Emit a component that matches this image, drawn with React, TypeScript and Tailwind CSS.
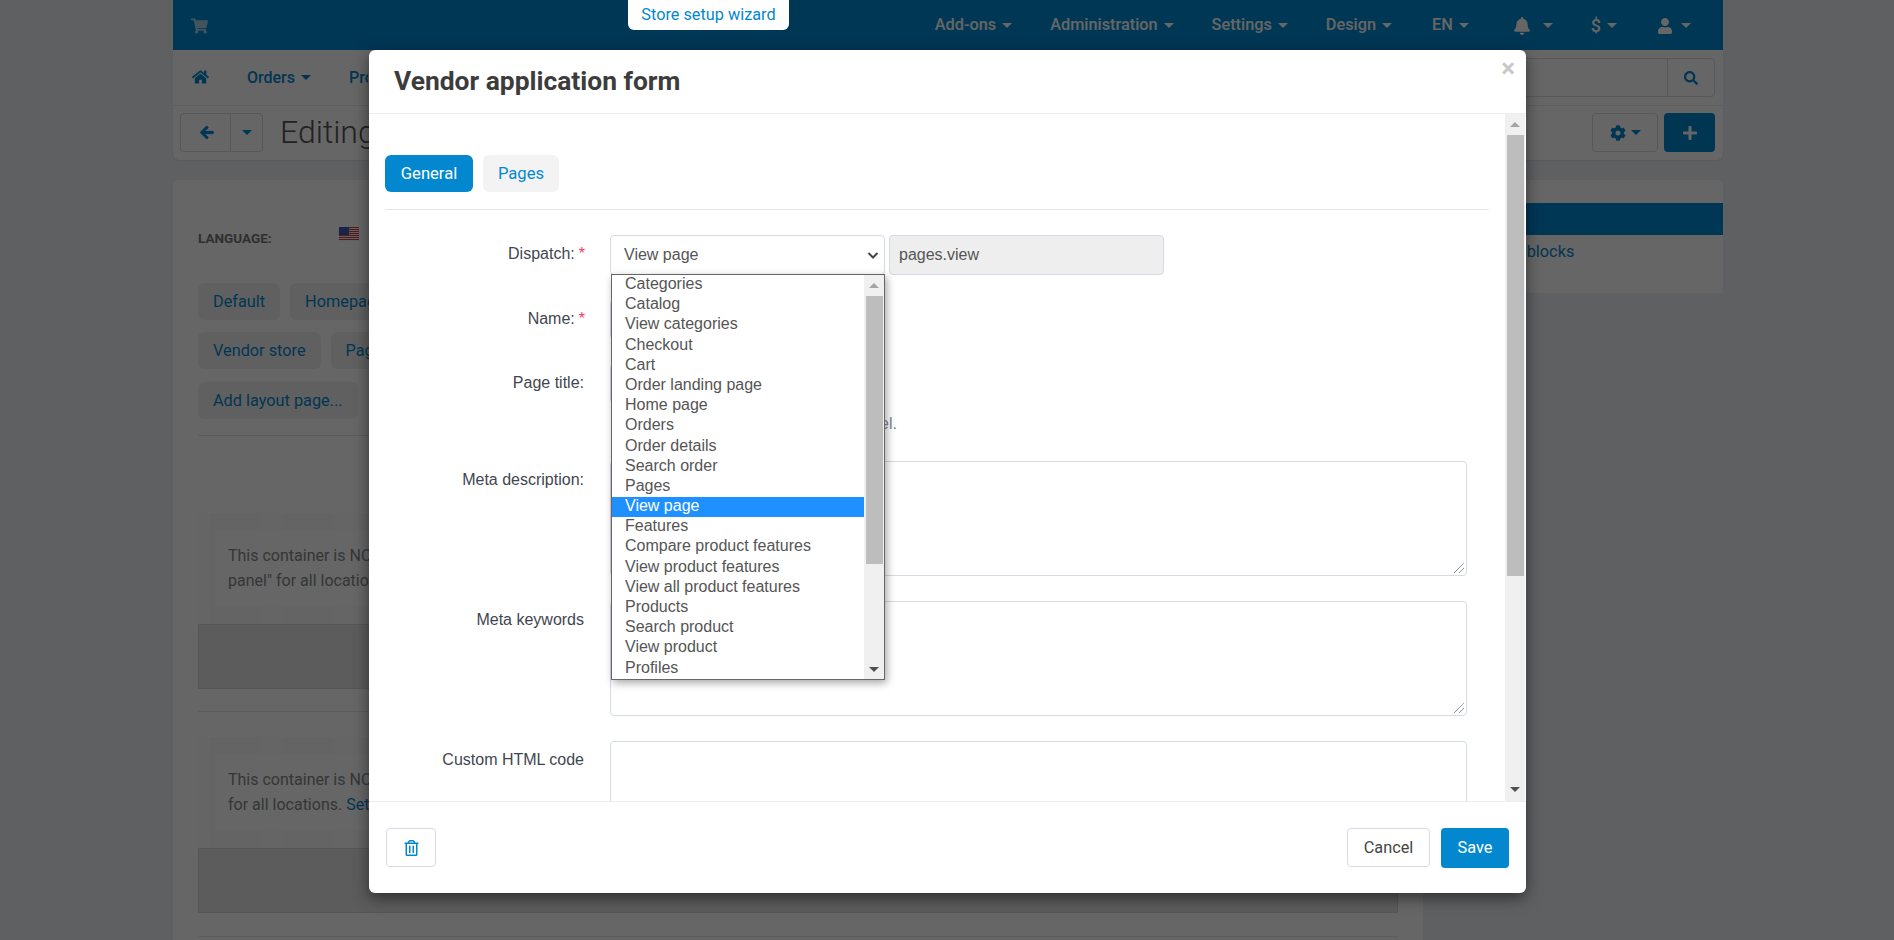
import React from "react";
import { FaShoppingCart, FaHome, FaArrowLeft, FaSearch, FaCog, FaPlus, FaBell, FaUser, FaRegTrashAlt } from "react-icons/fa";

const Caret = ({ c = "border-t-[#0388cf]" }: { c?: string }) => (
  <span className={`inline-block w-0 h-0 border-x-[5px] border-x-transparent border-t-[5px] ${c}`} />
);

const TopItem = ({ label, className }: { label: React.ReactNode; className: string }) => (
  <div className={`flex items-center gap-[6px] text-white font-medium text-[16.3px] ${className}`}>
    {label}
    <Caret c="border-t-white" />
  </div>
);

const PageButton = ({ children, className = "" }: { children: React.ReactNode; className?: string }) => (
  <div className={`h-[37px] px-[15px] pt-[1px] flex items-center rounded-[6px] bg-[#f0f1f3] text-[#0388cf] text-[16.3px] shrink-0 ${className}`}>{children}</div>
);

const UsFlag = () => (
  <svg width="20" height="14" viewBox="0 0 20 14" className="block">
    <rect width="20" height="14" fill="#f5f5f5" />
    {[0, 2, 4, 6, 8, 10, 12].map((y) => (
      <rect key={y} y={y} width="20" height="1" fill="#d8413f" />
    ))}
    <rect width="10" height="8" fill="#3c5bb5" />
  </svg>
);

const Notice = ({ children, top }: { children: React.ReactNode; top: string }) => (
  <div className={top}>
    <div className="h-[111px] bg-[#fcfcfd] pl-[12px]">
      <div className="h-[111px] py-[18px] pl-[5px] bg-[repeating-linear-gradient(90deg,#f9f9fa_0px,#f9f9fa_49px,#fcfcfd_49px,#fcfcfd_74px)]">
        <div className="h-[75px] bg-[#ffffff] pl-[13px] pt-[12px] text-[16px] leading-[25px] text-[#888] whitespace-nowrap">{children}</div>
      </div>
    </div>
    <div className="h-[65px] bg-[#e6e7e9] border border-[#d6d7d9]" />
  </div>
);

const Label = ({ text, req }: { text: string; req?: boolean }) => (
  <label className={`w-[200px] shrink-0 pt-[10px] text-right leading-[18px] text-[16px] text-[#3f4650] whitespace-nowrap ${req ? "" : "pr-[1px]"}`}>
    {text}
    {req ? <span className="text-[#f23b5c] ml-[4px]">*</span> : null}
  </label>
);

const ITEMS = [
  "Categories", "Catalog", "View categories", "Checkout", "Cart", "Order landing page", "Home page", "Orders",
  "Order details", "Search order", "Pages", "View page", "Features", "Compare product features",
  "View product features", "View all product features", "Products", "Search product", "View product", "Profiles",
];

const BORDER = "border border-[#d5dbe4]";

const TextArea = ({ h }: { h: string }) => (
  <div className={`relative w-[857px] ${h} ${BORDER} rounded-[4px] bg-white shrink-0`}>
    <svg width="12" height="12" viewBox="0 0 12 12" className="absolute right-[1px] bottom-[1px]">
      <path d="M1 11 L11 1 M6 11 L11 6" stroke="#666" strokeWidth="1" strokeDasharray="1 0.5" />
    </svg>
  </div>
);

export default function App() {
  return (
    <div className="relative h-[940px] overflow-hidden bg-[#eef0f5] font-['Roboto',sans-serif]">
      {/* underlying page */}
      <div className="w-[1550px] ml-[173px]">
        <header className="h-[50px] pt-[1px] bg-[#008ad4] flex items-center relative">
          <FaShoppingCart className="ml-[18px] text-[#a8d2ea] w-[17px] h-[16px]" />
          <div className="ml-auto flex items-center pr-[32px]">
            <TopItem label="Add-ons" className="mr-[38px]" />
            <TopItem label="Administration" className="mr-[38px]" />
            <TopItem label="Settings" className="mr-[38px]" />
            <TopItem label="Design" className="mr-[40px]" />
            <TopItem label="EN" className="mr-[44px]" />
            <TopItem label={<FaBell className="w-[18px] h-[18px] mr-[6px]" />} className="mr-[38px]" />
            <TopItem label={<span className="text-[18px]">$</span>} className="mr-[40px]" />
            <TopItem label={<FaUser className="w-[16px] h-[16px] mr-[2px]" />} className="" />
          </div>
        </header>
        <div className="h-[56px] bg-white border-b border-[#e9ebee] flex items-center pl-[19px] pr-[8px]">
          <FaHome className="text-[#0388cf] w-[17px] h-[16px] -mt-[2px]" />
          <div className="ml-[38px] flex items-center gap-[6px] text-[#0388cf] text-[16px] font-medium">Orders <Caret /></div>
          <div className="ml-[38px] text-[#0388cf] text-[16px] font-medium w-[19px] overflow-hidden">Products</div>
          <div className="ml-auto w-[300px] h-[39px] border border-[#d5dbe4] rounded-[4px] flex justify-end">
            <div className="w-[47px] border-l border-[#d5dbe4] flex items-center justify-center">
              <FaSearch className="text-[#0388cf] w-[14px] h-[14px]" />
            </div>
          </div>
        </div>
        <div className="h-[54px] bg-white rounded-b-[6px] flex items-start pt-[7px] pl-[7px] pr-[8px] shadow-[0_1px_2px_rgba(0,0,0,0.08)]">
          <div className="flex h-[39px] w-[83px] border border-[#d5dbe4] rounded-[4px]">
            <div className="w-[50px] flex items-center justify-center border-r border-[#d5dbe4] pl-[2px]">
              <FaArrowLeft stroke="currentColor" strokeWidth={30} className="text-[#0388cf] w-[16px] h-[15px]" />
            </div>
            <div className="flex-1 flex items-center justify-center"><Caret /></div>
          </div>
          <div className="ml-[17px] text-[32px] leading-[38px] font-light text-[#555] whitespace-nowrap">Editing layout</div>
          <div className="ml-auto flex gap-[6px]">
            <div className="w-[66px] h-[39px] border border-[#d5dbe4] rounded-[4px] flex items-center justify-center gap-[5px]">
              <FaCog className="text-[#0388cf] w-[16px] h-[16px]" />
              <Caret />
            </div>
            <div className="w-[51px] h-[39px] bg-[#0388cf] rounded-[4px] flex items-center justify-center">
              <FaPlus className="text-white w-[16px] h-[16px]" />
            </div>
          </div>
        </div>
        <div className="flex mt-[20px] gap-[20px] items-start">
          <main className="w-[1250px] h-[760px] bg-white rounded-t-[6px] pt-[47px] px-[25px] overflow-hidden">
            <div className="flex items-start h-[56px]">
              <span className="text-[13.5px] font-bold text-[#777] w-[141px] pt-[4px] leading-[14px]">LANGUAGE:</span>
              <UsFlag />
            </div>
            <div className="flex gap-[10px]"><PageButton>Default</PageButton><PageButton>Homepage</PageButton></div>
            <div className="flex gap-[10px] mt-[12px]"><PageButton>Vendor store</PageButton><PageButton>Pages</PageButton></div>
            <div className="flex gap-[10px] mt-[13px]"><PageButton>Add layout page...</PageButton></div>
            <div className="mt-[16px] border-t border-[#e4e5e7]" />
            <Notice top="mt-[77px]">
              <div>This container is NOT displayed in the "Top</div>
              <div>panel" for all locations.</div>
            </Notice>
            <div className="mt-[22px] border-t border-[#e4e5e7]" />
            <Notice top="mt-[25px]">
              <div>This container is NOT displayed in the "Bottom panel"</div>
              <div>for all locations. <span className="text-[#0388cf]">Set up</span></div>
            </Notice>
            <div className="mt-[23px] border-t border-[#e4e5e7]" />
          </main>
          <aside className="w-[280px] h-[113px] bg-white rounded-t-[6px] pt-[23px]">
            <div className="h-[32px] bg-[#008ad4]" />
            <div className="pl-[21px] pt-[8px] text-[16.3px] text-[#0388cf] leading-[18px]">Manage blocks</div>
          </aside>
        </div>
      </div>

      {/* backdrop */}
      <div className="absolute inset-0 bg-black/60" />

      {/* wizard tab */}
      <div className="absolute left-[628px] top-0 w-[161px] h-[30px] bg-white rounded-b-[6px] flex items-center justify-center text-[#0388cf] text-[16.3px]">
        Store setup wizard
      </div>

      {/* modal */}
      <div className="absolute left-[369px] top-[50px] w-[1157px] h-[843px] bg-white rounded-[6px] flex flex-col shadow-[0_5px_15px_rgba(0,0,0,0.5)]">
        <div className="relative h-[64px] shrink-0 border-b border-[#eceef1] pl-[25px] pt-[15px] leading-[32px] font-bold text-[#3c3c3c]">
          <span className="text-[26.4px]">Vendor application form</span>
          <span className="absolute right-[11px] top-[2px] text-[#c9c9c9] text-[26px] font-bold leading-[32px]">×</span>
        </div>
        <div className="flex-1 min-h-0 flex">
          <div className="flex-1 min-w-0 pl-[16px] pr-[16px] pt-[41px] overflow-hidden relative">
            <div className="flex gap-[10px]">
              <div className="w-[88px] h-[37px] pt-[1px] bg-[#0388cf] text-white rounded-[6px] flex items-center justify-center text-[16.6px]">General</div>
              <div className="w-[76px] h-[37px] pt-[1px] bg-[#f3f3f4] text-[#0388cf] rounded-[6px] flex items-center justify-center text-[16.6px]">Pages</div>
            </div>
            <div className="mt-[17px] border-t border-[#e4e6ea]" />
            <div className="mt-[25px] flex flex-col gap-[25px] font-['Liberation_Sans',sans-serif]">
              <div className="flex gap-[25px]">
                <Label text="Dispatch:" req />
                <div className="flex gap-[4px]">
                  <div className={`w-[275px] h-[40px] ${BORDER} rounded-[4px] flex items-center justify-between pl-[13px] pr-[4px] text-[16px] text-[#555]`}>
                    View page
                    <svg width="14" height="14" viewBox="0 0 14 14"><path d="M2.5 5 L7 9.5 L11.5 5" fill="none" stroke="#444" strokeWidth="2" /></svg>
                  </div>
                  <div className={`w-[275px] h-[40px] ${BORDER} rounded-[4px] bg-[#eeeeee] flex items-center pl-[9px] text-[16px] text-[#555]`}>pages.view</div>
                </div>
              </div>
              <div className="flex gap-[25px]">
                <Label text="Name:" req />
                <div className={`w-[270px] h-[39px] ${BORDER} rounded-[4px]`} />
              </div>
              <div className="flex gap-[25px]">
                <Label text="Page title:" />
                <div className="w-[287px]">
                  <div className={`w-[270px] h-[39px] ${BORDER} rounded-[4px]`} />
                  <div className="mt-[12px] h-[21px] leading-[18px] text-[16px] text-[#7f8894] whitespace-nowrap flex justify-end overflow-hidden">Used in Administration panel.</div>
                </div>
              </div>
              <div className="flex gap-[25px]">
                <Label text="Meta description:" />
                <TextArea h="h-[115px]" />
              </div>
              <div className="flex gap-[25px]">
                <Label text="Meta keywords" />
                <TextArea h="h-[115px]" />
              </div>
              <div className="flex gap-[25px]">
                <Label text="Custom HTML code" />
                <TextArea h="h-[115px]" />
              </div>
            </div>
          </div>
          {/* modal scrollbar */}
          <div className="w-[20px] shrink-0 mr-px bg-[#f0f0f0] flex flex-col items-center">
            <div className="h-[21px] flex items-center justify-center w-full">
              <span className="w-0 h-0 border-x-[5px] border-x-transparent border-b-[5px] border-b-[#a3a3a3]" />
            </div>
            <div className="w-[17px] h-[441px] bg-[#bdbdbd]" />
            <div className="mt-auto h-[21px] flex items-center justify-center w-full pb-[2px]">
              <span className="w-0 h-0 border-x-[5px] border-x-transparent border-t-[5px] border-t-[#505050]" />
            </div>
          </div>
        </div>
        <div className="h-[92px] shrink-0 border-t border-[#eceef1] flex items-start pt-[26px] pl-[17px] pr-[17px]">
          <div className={`w-[50px] h-[39px] ${BORDER} rounded-[4px] flex items-center justify-center`}>
            <FaRegTrashAlt className="text-[#0388cf] w-[15px] h-[16px]" />
          </div>
          <div className={`ml-auto w-[83px] h-[39px] pt-[1px] ${BORDER} rounded-[4px] flex items-center justify-center text-[16.3px] text-[#444]`}>Cancel</div>
          <div className="ml-[11px] w-[68px] h-[40px] bg-[#0388cf] rounded-[4px] flex items-center justify-center text-[16.3px] text-white">Save</div>
        </div>
      </div>

      {/* open dropdown list */}
      <div className="absolute left-[611px] top-[274px] w-[274px] h-[406px] bg-white border border-[#666] shadow-[2px_3px_8px_rgba(0,0,0,0.35)] flex font-['Liberation_Sans',sans-serif] text-[16px] text-[#555] overflow-hidden">
        <div className="flex-1 min-w-0">
          {ITEMS.map((t) => (
            <div key={t} className={`h-[20.2px] leading-[17px] pl-[13px] whitespace-nowrap ${t === "View page" ? "bg-[#1e90ff] text-white" : ""}`}>{t}</div>
          ))}
        </div>
        <div className="w-[20px] shrink-0 bg-[#f0f0f0] flex flex-col items-center">
          <div className="h-[21px] flex items-center justify-center w-full">
            <span className="w-0 h-0 border-x-[5px] border-x-transparent border-b-[5px] border-b-[#a3a3a3]" />
          </div>
          <div className="w-[17px] h-[268px] bg-[#bdbdbd]" />
          <div className="mt-auto h-[19px] flex items-center justify-center w-full">
            <span className="w-0 h-0 border-x-[5px] border-x-transparent border-t-[5px] border-t-[#505050]" />
          </div>
        </div>
      </div>
    </div>
  );
}
